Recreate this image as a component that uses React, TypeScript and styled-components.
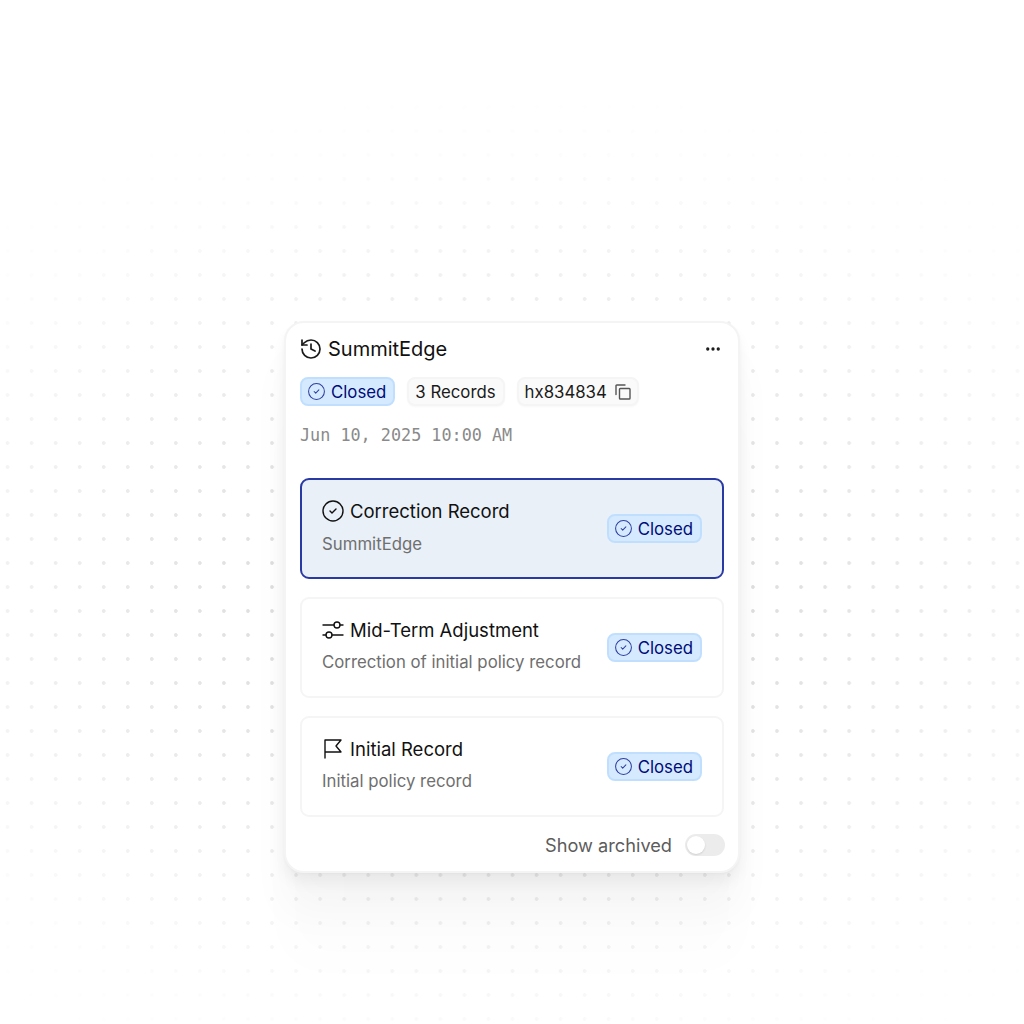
import React from 'react';
import styled, { createGlobalStyle } from 'styled-components';
import { CircleCheck, History, Ellipsis } from 'lucide-react';

const GlobalStyle = createGlobalStyle`
  html, body {
    margin: 0;
    padding: 0;
    background: #fff;
  }
`;

const Page = styled.div`
  width: 1024px;
  height: 1024px;
  box-sizing: border-box;
  overflow: hidden;
  padding: 321px 0 0 284px;
  font-family: Inter, "Liberation Sans", sans-serif;
  background-color: #fff;
  background-image:
    radial-gradient(ellipse 800px 520px at 512px 600px, rgba(255, 255, 255, 0) 30%, rgba(255, 255, 255, 0.6) 65%, rgba(255, 255, 255, 0.92) 85%, #fff 100%),
    radial-gradient(circle at 7.5px 11px, #dedede 1.5px, rgba(222, 222, 222, 0) 2.2px);
  background-size: 100% 100%, 24.05px 24px;
`;

const Card = styled.div`
  width: 456px;
  height: 552px;
  box-sizing: border-box;
  padding: 13px 14px 0;
  background: #fff;
  border: 2px solid #f4f4f4;
  border-radius: 20px;
  box-shadow:
    0 1px 3px rgba(0, 0, 0, 0.03),
    0 10px 14px rgba(0, 0, 0, 0.05),
    0 40px 40px rgba(0, 0, 0, 0.03),
    0 90px 50px rgba(0, 0, 0, 0.012);
`;

const Header = styled.div`
  display: flex;
  align-items: center;
  justify-content: space-between;
  height: 25px;
  margin: 0 2px 0 -1px;
`;

const TitleGroup = styled.div`
  display: flex;
  align-items: center;
  gap: 5px;
`;

const Title = styled.h1`
  margin: 0;
  font-size: 20px;
  font-weight: 400;
  color: #111;
`;

const Chips = styled.div`
  display: flex;
  gap: 12px;
  margin-top: 16px;
`;

const Chip = styled.div`
  display: flex;
  align-items: center;
  gap: 8px;
  height: 29px;
  box-sizing: border-box;
  padding: 0 7px 0 6px;
  font-size: 16.8px;
  color: #1a1a1a;
  background: #fafafa;
  border: 2px solid #f5f5f5;
  border-radius: 8px;
  box-shadow: 0 1px 2px rgba(0, 0, 0, 0.03);
`;

const Badge = styled.div`
  display: flex;
  align-items: center;
  gap: 5px;
  height: 29px;
  box-sizing: border-box;
  padding: 0 7px 0 5px;
  flex-shrink: 0;
  font-size: 16.8px;
  font-weight: 400;
  color: #000c78;
  background: #d6eaff;
  border: 2px solid #c0dfff;
  border-radius: 8px;
`;

const Timestamp = styled.div`
  margin-top: 19px;
  height: 20px;
  line-height: 20px;
  font-family: "DejaVu Sans Mono", "Liberation Mono", monospace;
  font-size: 16.8px;
  color: #8a8a8a;
`;

const RecordList = styled.div`
  display: flex;
  flex-direction: column;
  gap: 18px;
  margin-top: 33px;
`;

const Record = styled.div<{ $active?: boolean }>`
  display: flex;
  align-items: center;
  justify-content: space-between;
  height: 101px;
  box-sizing: border-box;
  padding: 0 20px;
  background: ${(p) => (p.$active ? '#e9f0f8' : '#fff')};
  border: ${(p) => (p.$active ? '2px solid #2a3aa4' : '2px solid #f5f5f5')};
  border-radius: 9px;
`;

const RecordText = styled.div`
  display: flex;
  flex-direction: column;
  gap: 11px;
  margin-bottom: 4px;
`;

const RecordTitle = styled.div`
  display: flex;
  align-items: center;
  gap: 6px;
  font-size: 18.5px;
  font-weight: 400;
  color: #111;
`;

const RecordNote = styled.div`
  font-size: 16.8px;
  color: #6f6f6f;
`;

const Footer = styled.div`
  display: flex;
  align-items: center;
  justify-content: flex-end;
  gap: 13px;
  margin: 17px -1px 0 0;
  font-size: 18.2px;
  color: #5c5c5c;
`;

const Toggle = styled.div`
  width: 40px;
  height: 22px;
  box-sizing: border-box;
  padding: 2px;
  background: #ececec;
  border-radius: 11px;
`;

const Knob = styled.div`
  width: 18px;
  height: 18px;
  background: #fff;
  border-radius: 50%;
  box-shadow: 0 1px 2px rgba(0, 0, 0, 0.12);
`;

const IconSvg = styled.svg`
  flex-shrink: 0;
  fill: none;
  stroke: currentColor;
  stroke-width: 1.4;
  stroke-linecap: round;
  stroke-linejoin: round;
`;

const CopySvg = styled(IconSvg)`
  color: #555;
  margin-right: -1px;
`;

const RecordCheck = styled(CircleCheck)`
  flex-shrink: 0;
  margin: 0 -1px;
`;

const CopyIcon = () => (
  <CopySvg width="16" height="16" viewBox="0 0 16 16">
    <rect x="4.5" y="4.5" width="10.5" height="10.5" rx="0.8" />
    <path d="M1 10.5V1.8c0-.4.3-.8.8-.8H10" />
  </CopySvg>
);

const SlidersIcon = () => (
  <IconSvg width="22" height="22" viewBox="0 0 22 22">
    <path d="M1 6h11M18 6h3M1 16h3M10 16h11" />
    <circle cx="15" cy="6" r="3" />
    <circle cx="7" cy="16" r="3" />
  </IconSvg>
);

const FlagIcon = () => (
  <IconSvg width="22" height="22" viewBox="0 0 22 22">
    <path d="M3 20V2h16l-5 6 5 6H3" />
  </IconSvg>
);

const ClosedBadge = () => (
  <Badge>
    <CircleCheck size={19} strokeWidth={1.3} color="#2f3f9f" />
    Closed
  </Badge>
);

const records = [
  { title: 'Correction Record', note: 'SummitEdge', icon: <RecordCheck size={24} strokeWidth={1.4} />, active: true },
  { title: 'Mid-Term Adjustment', note: 'Correction of initial policy record', icon: <SlidersIcon /> },
  { title: 'Initial Record', note: 'Initial policy record', icon: <FlagIcon /> },
];

const App: React.FC = () => (
  <Page>
    <GlobalStyle />
    <Card>
      <Header>
        <TitleGroup>
          <History size={24} strokeWidth={1.7} color="#1a1a1a" />
          <Title>SummitEdge</Title>
        </TitleGroup>
        <Ellipsis size={18} strokeWidth={2.4} color="#1a1a1a" />
      </Header>
      <Chips>
        <ClosedBadge />
        <Chip>3 Records</Chip>
        <Chip>
          hx834834
          <CopyIcon />
        </Chip>
      </Chips>
      <Timestamp>Jun 10, 2025 10:00 AM</Timestamp>
      <RecordList>
        {records.map((r) => (
          <Record key={r.title} $active={r.active}>
            <RecordText>
              <RecordTitle>
                {r.icon}
                {r.title}
              </RecordTitle>
              <RecordNote>{r.note}</RecordNote>
            </RecordText>
            <ClosedBadge />
          </Record>
        ))}
      </RecordList>
      <Footer>
        Show archived
        <Toggle>
          <Knob />
        </Toggle>
      </Footer>
    </Card>
  </Page>
);

export default App;
